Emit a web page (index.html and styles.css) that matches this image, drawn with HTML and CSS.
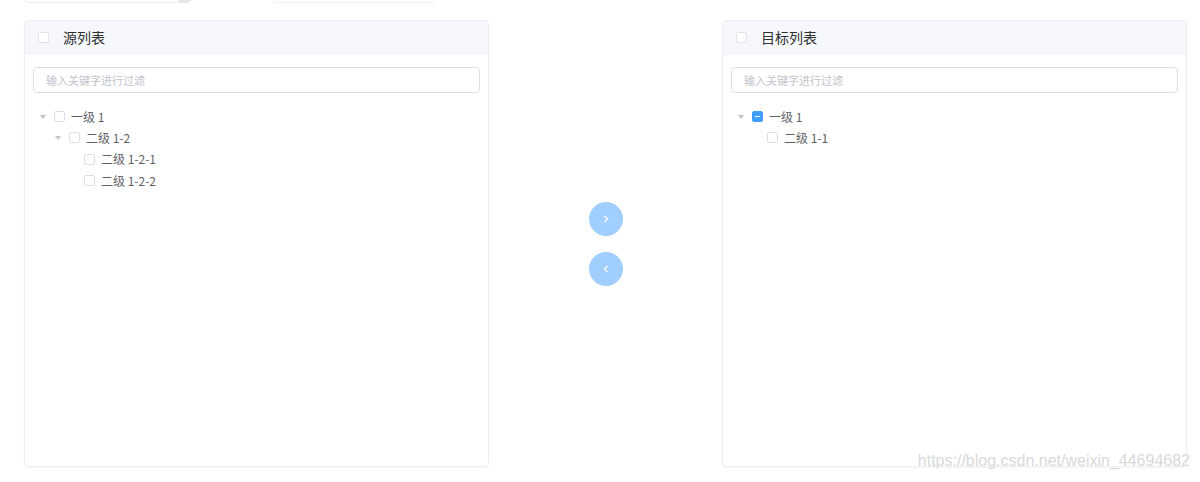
FILE: index.html
```html
<!DOCTYPE html>
<html lang="zh-CN">
<head>
  <meta charset="UTF-8">
  <meta name="viewport" content="width=device-width, initial-scale=1.0">
  <title>树形穿梭框</title>
  <link rel="stylesheet" href="styles.css">
</head>
<body>
  <div class="toolbar">
    <div class="tool-input first"><span class="tool-btn"></span></div>
    <div class="tool-input second"></div>
  </div>

  <div class="transfer">
    <!-- 源列表 -->
    <div class="panel">
      <div class="panel-header">
        <span class="checkbox"></span>
        <span class="panel-title">源列表</span>
      </div>
      <div class="panel-body">
        <input class="filter" type="text" placeholder="输入关键字进行过滤">
        <div class="tree">
          <div class="node lvl1"><span class="arrow open"></span><span class="checkbox small"></span><span class="label">一级 1</span></div>
          <div class="node lvl2"><span class="arrow open"></span><span class="checkbox small"></span><span class="label">二级 1-2</span></div>
          <div class="node lvl3"><span class="arrow"></span><span class="checkbox small"></span><span class="label">二级 1-2-1</span></div>
          <div class="node lvl3"><span class="arrow"></span><span class="checkbox small"></span><span class="label">二级 1-2-2</span></div>
        </div>
      </div>
    </div>

    <div class="actions">
      <button class="circle-btn" disabled>
        <svg width="10" height="10" viewBox="0 0 10 10"><path d="M3.5 2 L6.5 5 L3.5 8" fill="none" stroke="#fff" stroke-width="1.2"/></svg>
      </button>
      <button class="circle-btn" disabled>
        <svg width="10" height="10" viewBox="0 0 10 10"><path d="M6.5 2 L3.5 5 L6.5 8" fill="none" stroke="#fff" stroke-width="1.2"/></svg>
      </button>
    </div>

    <!-- 目标列表 -->
    <div class="panel">
      <div class="panel-header">
        <span class="checkbox"></span>
        <span class="panel-title">目标列表</span>
      </div>
      <div class="panel-body">
        <input class="filter" type="text" placeholder="输入关键字进行过滤">
        <div class="tree">
          <div class="node lvl1"><span class="arrow open"></span><span class="checkbox small half"></span><span class="label">一级 1</span></div>
          <div class="node lvl2"><span class="arrow"></span><span class="checkbox small"></span><span class="label">二级 1-1</span></div>
        </div>
      </div>
    </div>
  </div>

  <div class="watermark">https://blog.csdn.net/weixin_44694682</div>
</body>
</html>
```

FILE: styles.css
```css
body { margin: 0; background: #fff; font-family: "Noto Sans CJK SC", "Noto Sans", sans-serif; color: #606266; position: relative; height: 482px; overflow: hidden; }

.toolbar { height: 3px; display: flex; align-items: flex-end; overflow: hidden; }
.tool-input { height: 30px; border: 1px solid #ebeef5; border-radius: 4px; position: relative; flex: none; }
.tool-input.first { width: 160px; margin-left: 25px; }
.tool-input.second { width: 160px; margin-left: 86px; border-color: #f0f1f4; }
.tool-btn { position: absolute; right: -6px; bottom: -1px; width: 16px; height: 6px; background: #e6e7ea; border-radius: 0 0 8px 8px; }

.transfer { display: flex; padding: 17px 0 0 24px; }
.panel { width: 463px; height: 445px; border: 1px solid #ebeef5; border-radius: 4px; box-shadow: 0 1px 2px rgba(0,0,0,0.04); overflow: hidden; flex: none; background: #fff; }
.panel-header { height: 34px; background: #f5f7fa; display: flex; align-items: center; padding-left: 13px; }
.panel-title { font-size: 14px; color: #303133; margin-left: 14px; margin-top: -3px; }
.panel-header .checkbox { margin-top: -2px; border-color: #e1e4ea; }

.checkbox { display: inline-block; width: 11px; height: 11px; border: 1px solid #dcdfe6; border-radius: 2px; background: #fff; box-sizing: border-box; flex: none; position: relative; }
.checkbox.half { background: #409eff; border-color: #409eff; }
.checkbox.half::after { content: ""; position: absolute; left: 2px; right: 2px; top: 4px; height: 1px; background: #fff; }

.panel-body { padding: 11px 8px 0 8px; }
.filter { width: 100%; height: 26px; box-sizing: border-box; border: 1px solid #dcdfe6; border-radius: 4px; padding: 0 12px; font-size: 11px; font-family: inherit; outline: none; color: #606266; }
.filter::placeholder { color: #c0c4cc; }

.tree { margin-top: 13px; }
.node { height: 21.3px; display: flex; align-items: center; font-size: 12px; padding-left: 4px; }
.node.lvl2 { padding-left: 19px; }
.node.lvl3 { padding-left: 34px; }
.arrow { width: 12px; height: 12px; margin-right: 5px; position: relative; flex: none; }
.arrow.open::after { content: ""; position: absolute; left: 3px; top: 4px; border-left: 3px solid transparent; border-right: 3px solid transparent; border-top: 4px solid #c0c4cc; }
.label { margin-left: 6px; color: #606266; white-space: nowrap; margin-top: -1px; }

.actions { width: 233px; display: flex; flex-direction: column; align-items: center; justify-content: center; gap: 16px; flex: none; }
.circle-btn { width: 34px; height: 34px; border-radius: 50%; border: none; background: #a0cfff; display: flex; align-items: center; justify-content: center; padding: 0; }

.watermark { position: absolute; right: 10px; top: 452px; font-family: "Liberation Sans", Arial, sans-serif; font-size: 16px; color: #d9d9d9; text-shadow: 0 0 2px #fff; }
```
